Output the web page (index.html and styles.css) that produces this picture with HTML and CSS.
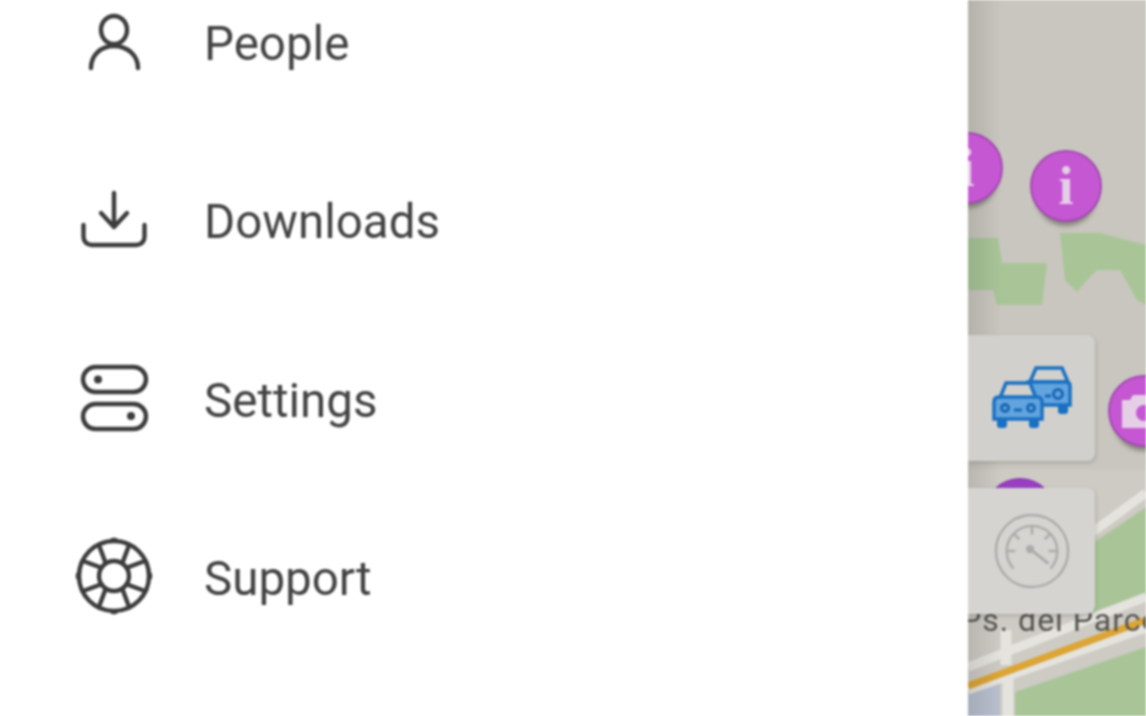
FILE: index.html
```html
<!DOCTYPE html>
<html lang="en">
<head>
  <meta charset="utf-8">
  <meta name="viewport" content="width=device-width, initial-scale=1.0">
  <title>Menu</title>
  <link rel="stylesheet" href="styles.css">
</head>
<body>
  <div class="screen">
    <!-- Drawer -->
    <nav class="drawer">
      <a class="menu-item">
        <svg class="menu-icon" viewBox="0 0 80 80">
          <ellipse cx="40" cy="29" rx="13" ry="14"/>
          <path d="M17 67c0-13 10-22 23-22s24 9 24 22"/>
        </svg>
        <span class="menu-label">People</span>
      </a>
      <a class="menu-item">
        <svg class="menu-icon" viewBox="0 0 80 80">
          <path d="M40 14v34M27 34l13 14 13-14"/>
          <path d="M9.500 46v12a8 8 0 0 0 8 8h45a8 8 0 0 0 8-8V46"/>
        </svg>
        <span class="menu-label">Downloads</span>
      </a>
      <a class="menu-item">
        <svg class="menu-icon" viewBox="0 0 80 80">
          <rect x="9" y="9" width="63" height="25" rx="12.500"/>
          <rect x="9" y="46" width="63" height="25" rx="12.500"/>
          <circle class="icon-dot" cx="24" cy="21.500" r="4"/>
          <circle class="icon-dot" cx="57" cy="58" r="4"/>
        </svg>
        <span class="menu-label">Settings</span>
      </a>
      <a class="menu-item">
        <svg class="menu-icon" viewBox="0 0 80 80">
          <circle cx="40" cy="40" r="35"/>
          <circle cx="40" cy="40" r="15"/>
          <path d="M31.800 27.400L24.700 8.500M48.200 27.400L55.300 8.500M31.800 52.600L24.700 71.500M48.200 52.600L55.300 71.500M27.400 31.800L8.500 24.700M27.400 48.200L8.500 55.300M52.600 31.800L71.500 24.700M52.600 48.200L71.500 55.300"/>
          <path d="M38.500 4h3M38.500 76h3M4 38.500v3M76 38.500v3"/>
        </svg>
        <span class="menu-label">Support</span>
      </a>
    </nav>

    <!-- Map -->
    <div class="map">
      <svg class="map-ground" viewBox="0 0 178 716">
        <rect class="ground-pale" x="0" y="470" width="178" height="246"/>
        <path class="park" d="M0 238h30l4 25h45l-5 42H29l-4-15H0z"/>
        <path class="park" d="M92 233h40l46 12v60l-9-5-17-30h-23l-10 10-10 12-12-12z"/>
        <path class="park" d="M122 545l56-38v86l-56 20z"/>
        <path class="park" d="M47 692l131-45v69H47z"/>
        <path class="water" d="M0 688l32-5v33H0z"/>
        <path class="road" d="M122 534l56-41"/>
        <path class="road" d="M0 667l178-70"/>
        <path class="road" d="M0 690l178-62"/>
        <path class="road road-thin" d="M38 630v35M40 678v38"/>
        <path class="road-main" d="M0 686l178-66"/>
      </svg>
      <div class="map-shade"></div>
      <div class="pin pin-left">i</div>
      <div class="pin pin-info">i</div>
      <div class="pin pin-photo">
        <svg class="pin-camera" viewBox="0 0 40 34">
          <path d="M0 6h8l3-5h16l3 5h10v28H0z"/>
          <circle cx="22" cy="19" r="8"/>
        </svg>
      </div>
      <div class="pin pin-violet"></div>
      <span class="street-name">Ps. dei Parco</span>

      <!-- Map buttons -->
      <div class="map-controls">
        <div class="map-btn">
          <svg class="traffic-icon" viewBox="0 0 80 66">
            <!-- back car -->
            <path class="car-glass" d="M38 17l6-14h26l6 14z"/>
            <path class="car-body" d="M36 17h38q4 0 4 4v19H36z"/>
            <path class="car-wheel" d="M66 40h10v6q0 3-3 3h-4q-3 0-3-3z"/>
            <circle class="car-line" cx="66" cy="29" r="4.500"/>
            <path class="car-line" d="M53 31h6"/>
            <!-- front car -->
            <path class="car-glass" d="M8 33l6-15h24l6 15z"/>
            <path class="car-body" d="M7 32h38q5 0 5 5v17H2V37q0-5 5-5z"/>
            <path class="car-wheel" d="M5 54h10v6q0 3-3 3H8q-3 0-3-3zM37 54h10v6q0 3-3 3h-4q-3 0-3-3z"/>
            <circle class="car-line" cx="13" cy="43" r="3.500"/>
            <circle class="car-line" cx="39" cy="43" r="3.500"/>
            <path class="car-line" d="M22 45h8"/>
          </svg>
        </div>
        <div class="map-btn map-btn-pale">
          <svg class="gauge-icon" viewBox="0 0 80 80">
            <circle cx="40" cy="40" r="37"/>
            <path d="M21 58a26 26 0 1 1 38 0"/>
            <path d="M40 14v9M21 22l6 6M59 22l-6 6M14 40h9M66 40h-9"/>
            <path class="gauge-needle" d="M38 38l19 15"/>
            <circle class="gauge-hub" cx="38" cy="38" r="3"/>
          </svg>
        </div>
      </div>
    </div>
  </div>
</body>
</html>
```

FILE: styles.css
```css
* {
  margin: 0;
  padding: 0;
  box-sizing: border-box;
}

html, body {
  width: 100%;
  height: 100%;
  overflow: hidden;
  background: #fff;
}

body {
  font-family: Roboto, "Liberation Sans", sans-serif;
}

.screen {
  display: flex;
  height: 716px;
  overflow: hidden;
  filter: blur(0.8px);
}

/* Drawer */
.drawer {
  width: 968px;
  margin-top: -48px;
  background: #fff;
}

.menu-item {
  display: flex;
  align-items: center;
  gap: 50px;
  height: 178.3px;
  padding-left: 74px;
  color: #434343;
}

.menu-icon {
  width: 80px;
  height: 80px;
  flex-shrink: 0;
  fill: none;
  stroke: #3c3c3c;
  stroke-width: 4.400;
  stroke-linecap: round;
  stroke-linejoin: round;
}

.icon-dot {
  fill: #3c3c3c;
  stroke: none;
}

.menu-label {
  font-size: 47.500px;
  line-height: 54px;
  margin-top: 6px;
}

/* Map */
.map {
  position: relative;
  flex: 1;
  overflow: hidden;
  background: #c8c6be;
}

.map-ground {
  position: absolute;
  top: 0;
  left: 0;
  width: 178px;
  height: 716px;
}

.ground-pale {
  fill: #cdcbc4;
}

.park {
  fill: #a9c598;
}

.water {
  fill: #b9bfce;
}

.road {
  fill: none;
  stroke: #e4e3de;
  stroke-width: 9;
}

.road-thin {
  stroke-width: 11;
}

.road-main {
  fill: none;
  stroke: #dca535;
  stroke-width: 7;
}

.map-shade {
  position: absolute;
  top: 0;
  bottom: 0;
  left: 0;
  width: 34px;
  background: linear-gradient(to right, rgba(0, 0, 0, 0.1), rgba(0, 0, 0, 0));
}

.pin {
  position: absolute;
  width: 72px;
  height: 72px;
  display: flex;
  align-items: center;
  justify-content: center;
  border-radius: 50%;
  border: 2px solid #a24bb0;
  background: #c557d3;
  box-shadow: 0 9px 4px -5px rgba(70, 70, 60, 0.5);
  color: #e5cfe6;
  font-family: "Liberation Serif", serif;
  font-size: 54px;
  font-weight: 700;
}

.pin-left {
  top: 132px;
  left: -37px;
}

.pin-info {
  top: 150px;
  left: 62px;
}

.pin-photo {
  top: 375px;
  left: 140px;
}

.pin-camera {
  width: 40px;
  height: 34px;
  margin-right: 4px;
  fill: #e5cfe6;
}

.pin-camera circle {
  fill: #c557d3;
}

.pin-violet {
  top: 478px;
  left: 16px;
  border-color: #8d3bb5;
  background: #9a3fc4;
}

.street-name {
  position: absolute;
  top: 600px;
  left: -7px;
  color: #55534e;
  font-size: 32px;
  line-height: 40px;
  letter-spacing: 1px;
  white-space: nowrap;
}

/* Map buttons */
.map-controls {
  position: absolute;
  top: 335px;
  left: 0;
  display: flex;
  flex-direction: column;
  gap: 27px;
  width: 127px;
}

.map-btn {
  display: flex;
  align-items: center;
  justify-content: center;
  height: 126px;
  background: #d1d0cc;
  border-radius: 0 8px 8px 0;
  box-shadow: 1px 2px 4px rgba(0, 0, 0, 0.15);
}

.map-btn-pale {
  background: #d5d4d1;
}

.traffic-icon {
  width: 80px;
  height: 66px;
}

.car-body {
  fill: #62a4de;
  stroke: #1a70c2;
  stroke-width: 3.500;
}

.car-glass {
  fill: #d1d0cc;
  stroke: #1a70c2;
  stroke-width: 3.500;
}

.car-line {
  fill: none;
  stroke: #1767b4;
  stroke-width: 3;
}

.car-wheel {
  fill: #1a70c2;
}

.gauge-icon {
  width: 78px;
  height: 78px;
  fill: none;
  stroke: #ababa9;
  stroke-width: 2.500;
}

.gauge-needle {
  stroke-width: 3;
}

.gauge-hub {
  fill: #ababa9;
}
```
